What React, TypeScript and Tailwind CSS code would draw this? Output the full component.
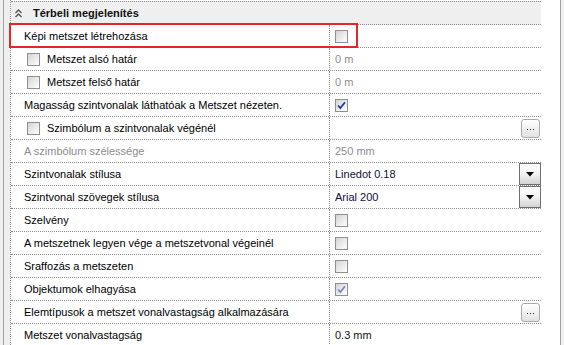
import React from 'react';

type Value =
  | { kind: 'check'; checked?: boolean; dim?: boolean }
  | { kind: 'text'; text: string; gray?: boolean }
  | { kind: 'dots' }
  | { kind: 'select'; text: string };

type Row = { label: string; box?: boolean; gray?: boolean; value: Value };

const rows: Row[] = [
  { label: 'Képi metszet létrehozása', value: { kind: 'check' } },
  { label: 'Metszet alsó határ', box: true, value: { kind: 'text', text: '0 m', gray: true } },
  { label: 'Metszet felső határ', box: true, value: { kind: 'text', text: '0 m', gray: true } },
  { label: 'Magasság szintvonalak láthatóak a Metszet nézeten.', value: { kind: 'check', checked: true } },
  { label: 'Szimbólum a szintvonalak végénél', box: true, value: { kind: 'dots' } },
  { label: 'A szimbólum szélessége', gray: true, value: { kind: 'text', text: '250 mm', gray: true } },
  { label: 'Szintvonalak stílusa', value: { kind: 'select', text: 'Linedot 0.18' } },
  { label: 'Szintvonal szövegek stílusa', value: { kind: 'select', text: 'Arial 200' } },
  { label: 'Szelvény', value: { kind: 'check' } },
  { label: 'A metszetnek legyen vége a metszetvonal végeinél', value: { kind: 'check' } },
  { label: 'Sraffozás a metszeten', value: { kind: 'check' } },
  { label: 'Objektumok elhagyása', value: { kind: 'check', checked: true, dim: true } },
  { label: 'Elemtípusok a metszet vonalvastagság alkalmazására', value: { kind: 'dots' } },
  { label: 'Metszet vonalvastagság', value: { kind: 'text', text: '0.3 mm' } },
];

const CheckBox: React.FC<{ checked?: boolean; dim?: boolean }> = ({ checked, dim }) => (
  <div className="w-[13px] h-[13px] shrink-0 border border-[#8f8f8f] bg-linear-to-br from-[#d4d4d4] to-white flex items-center justify-center">
    {checked && (
      <svg width="9" height="9" viewBox="0 0 9 9">
        <path
          d="M1 4.5 L3.3 7 L8 1.2"
          fill="none"
          stroke={dim ? '#7e89bd' : '#26389c'}
          strokeWidth="1.8"
        />
      </svg>
    )}
  </div>
);

const DotsButton: React.FC = () => (
  <div className="w-[19px] h-[19px] mr-px rounded-[3px] border border-[#a9a9a9] bg-linear-to-b from-white to-[#e2e2e2] flex items-center justify-center gap-[2px] pt-[2px]">
    <span className="w-px h-px bg-[#222]" />
    <span className="w-px h-px bg-[#222]" />
    <span className="w-px h-px bg-[#222]" />
  </div>
);

const SelectButton: React.FC = () => (
  <div className="w-[22px] h-[22px] border border-[#6e6e6e] bg-linear-to-b from-white via-[#f2f2f2] to-[#d3d3d3] flex items-center justify-center">
    <svg width="8" height="5" viewBox="0 0 8 5">
      <path d="M0 0 H8 L4 4.5 Z" fill="#000" />
    </svg>
  </div>
);

const ValueCell: React.FC<{ v: Value }> = ({ v }) => {
  if (v.kind === 'check')
    return (
      <div className="pl-[5px] flex items-center h-full">
        <CheckBox checked={v.checked} dim={v.dim} />
      </div>
    );
  if (v.kind === 'text')
    return (
      <div className={`pl-[5px] flex items-center h-full ${v.gray ? 'text-[#8c8c8c]' : 'text-[#111]'}`}>{v.text}</div>
    );
  if (v.kind === 'dots')
    return (
      <div className="flex items-center justify-end h-full">
        <DotsButton />
      </div>
    );
  return (
    <div className="pl-[5px] flex items-center justify-between h-full text-[#10103a]">
      <span>{v.text}</span>
      <SelectButton />
    </div>
  );
};

export default function App() {
  return (
    <div
      className="relative w-[564px] h-[345px] overflow-hidden bg-white flex text-[11px] text-black"
      style={{ fontFamily: '"Liberation Sans", Arial, sans-serif' }}
    >
      <div className="w-[10px] shrink-0 bg-[#efefef] flex">
        <div className="w-[3px]" />
        <div className="w-px bg-[#a3a3a3]" />
      </div>

      <div className="w-[531px] shrink-0 border-l border-dotted border-[#8a8a8a] pt-px">
        <div className="h-[24px] bg-[#efefef] border-y border-dotted border-[#8a8a8a] flex items-center pl-[4px] gap-[11px]">
          <svg width="7" height="9" viewBox="0 0 7 9">
            <path d="M0.5 4 L3.5 1 L6.5 4 M0.5 8 L3.5 5 L6.5 8" fill="none" stroke="#555" strokeWidth="1.4" />
          </svg>
          <span className="font-bold text-[11px] text-[#111]">Térbeli megjelenítés</span>
        </div>

        {rows.map((r) => (
          <div key={r.label} className="h-[23px] border-b border-dotted border-[#8a8a8a] flex">
            <div
              className={`w-[318px] shrink-0 flex items-center ${r.box ? 'pl-[16px] gap-[7px]' : 'pl-[13px]'} ${
                r.gray ? 'text-[#8c8c8c]' : ''
              }`}
            >
              {r.box && <CheckBox />}
              <span className="whitespace-nowrap">{r.label}</span>
            </div>
            <div className="flex-1 border-l border-dotted border-[#8a8a8a]">
              <ValueCell v={r.value} />
            </div>
          </div>
        ))}
      </div>

      <div className="w-[19px] shrink-0" />
      <div className="w-px shrink-0 bg-[#a0a0a0]" />
      <div className="w-[3px] shrink-0 bg-[#efefef]" />

      <div className="absolute left-[9px] top-[23px] w-[349px] h-[25px] border-2 border-[#e8232b]" />
    </div>
  );
}
